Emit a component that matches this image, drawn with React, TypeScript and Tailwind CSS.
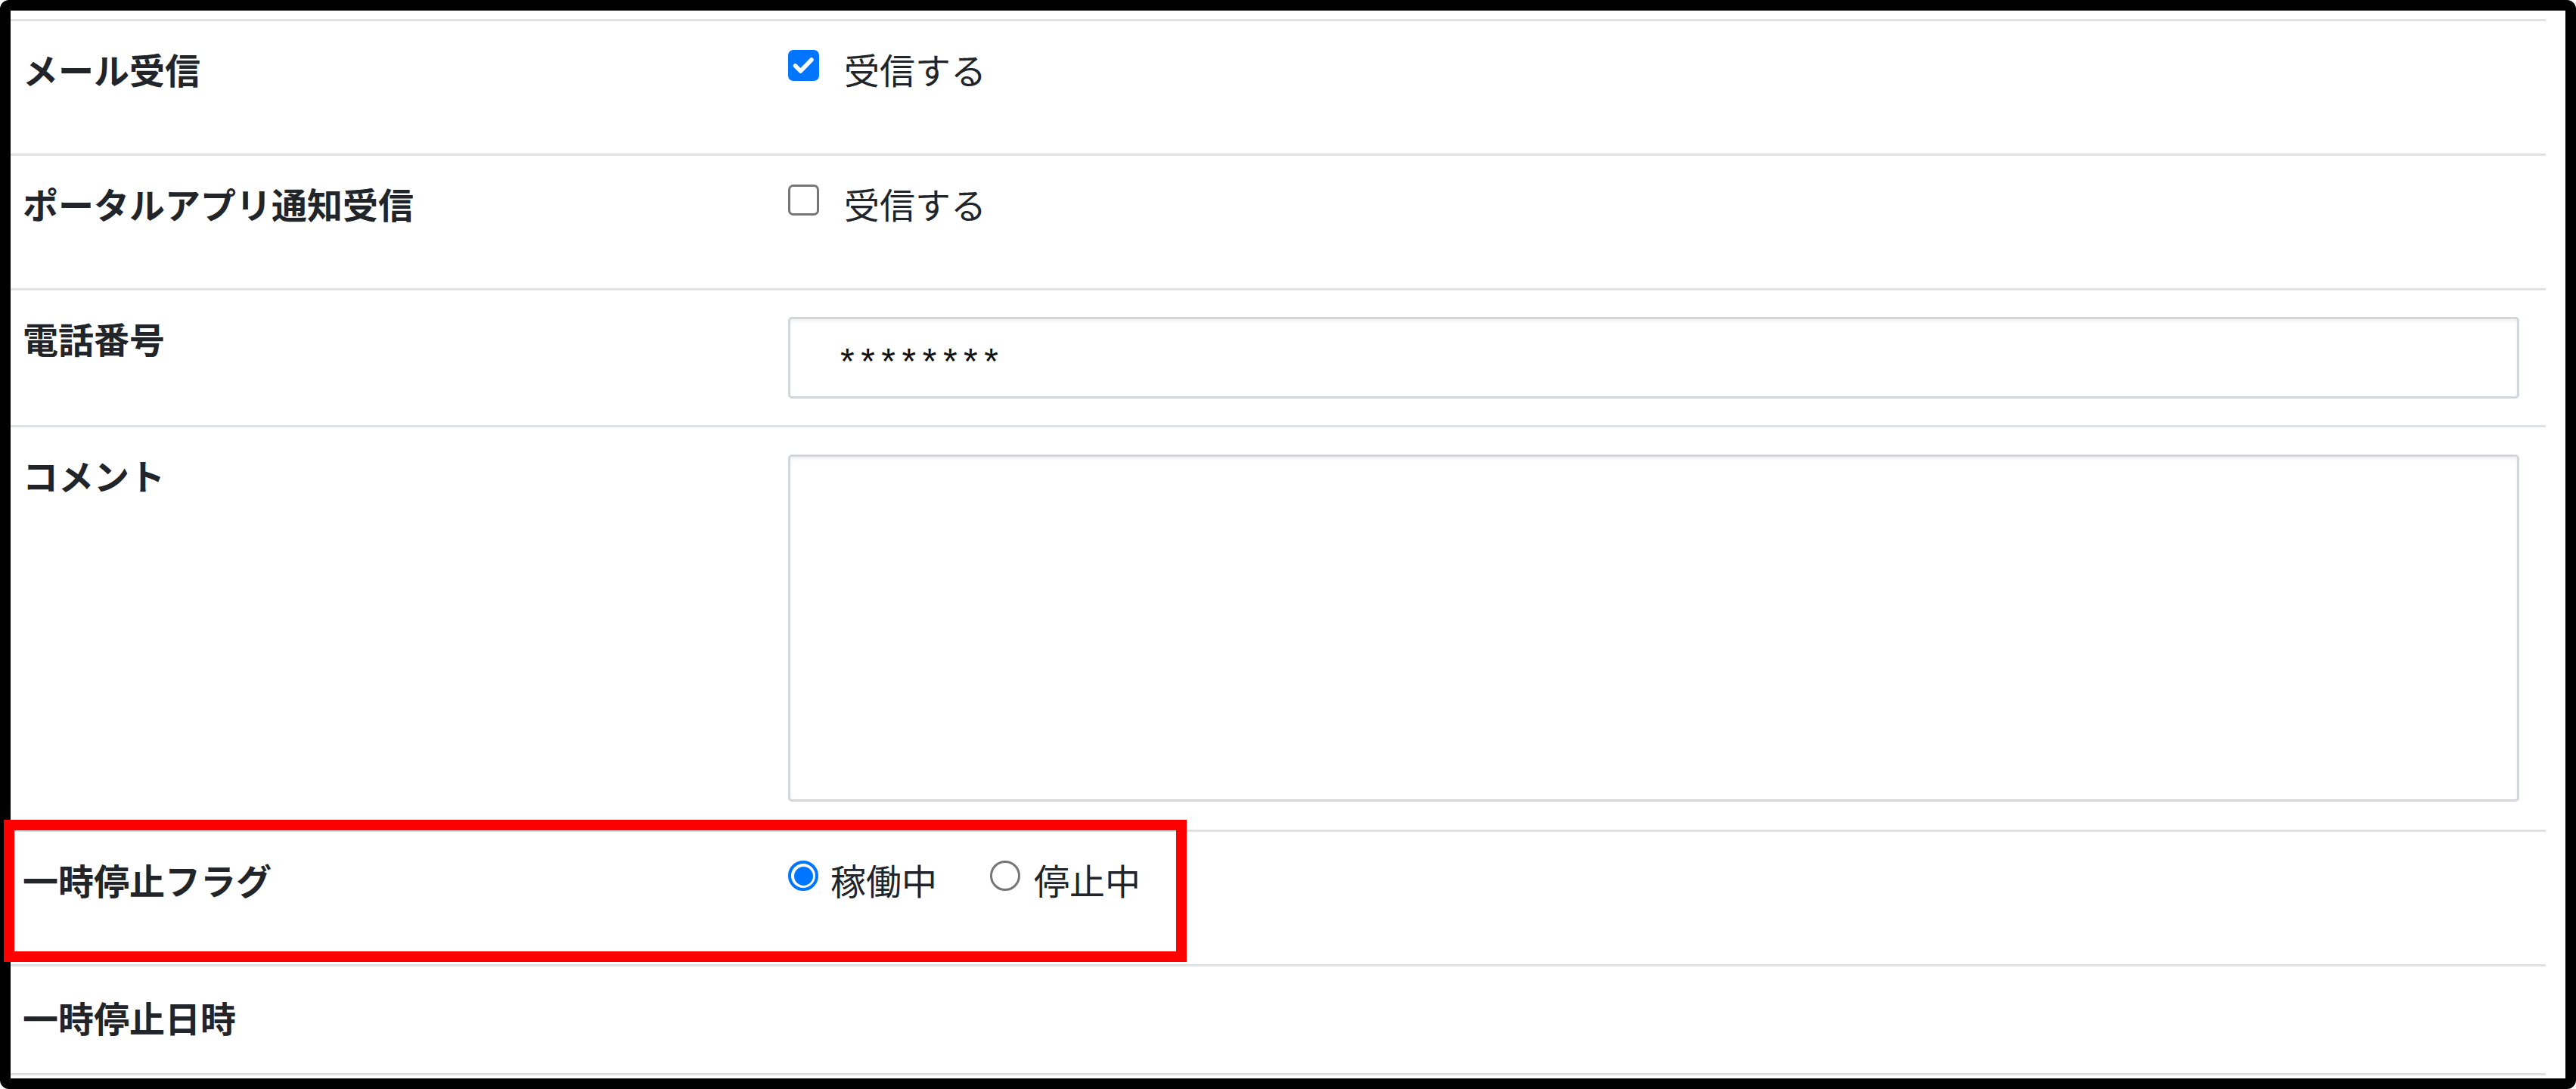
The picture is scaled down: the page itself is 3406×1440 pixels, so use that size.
import React from "react";

const FONT = "font-['Noto_Sans_CJK_JP','Noto_Sans',sans-serif]";

function CheckedBox() {
  return (
    <div className="mt-[10px] w-[41px] h-[41px] shrink-0 rounded-[7px] bg-[#0075ff] flex items-center justify-center">
      <svg width="41" height="41" viewBox="0 0 41 41">
        <path d="M9.5 21 L16.5 28 L31 13" fill="none" stroke="#ffffff" strokeWidth="5.5" strokeLinecap="round" strokeLinejoin="round" />
      </svg>
    </div>
  );
}

function EmptyBox() {
  return <div className="mt-[10px] w-[41px] h-[41px] shrink-0 rounded-[7px] border-[3px] border-[#767676] bg-white" />;
}

function RadioOn() {
  return (
    <div className="mt-[10px] w-[40px] h-[40px] shrink-0 rounded-full border-[4px] border-[#0075ff] bg-white flex items-center justify-center">
      <div className="w-[25px] h-[25px] rounded-full bg-[#0075ff]" />
    </div>
  );
}

function RadioOff() {
  return <div className="mt-[10px] w-[40px] h-[40px] shrink-0 rounded-full border-[3px] border-[#767676] bg-white" />;
}

function Label({ children, pt = "pt-[28px]" }: { children: React.ReactNode; pt?: string }) {
  return (
    <div className={`w-[1028px] shrink-0 pl-[16px] ${pt} font-bold text-[47px] leading-[69px]`}>{children}</div>
  );
}

export default function App() {
  return (
    <div className={`relative w-[3406px] h-[1440px] bg-white ${FONT} text-[#212529]`}>
      <div className="w-full h-full border-[14px] border-black rounded-[12px] bg-white pt-[11px] pr-[26px]">
        {/* メール受信 */}
        <div className="flex h-[178px] border-t-[3px] border-[#dee2e6]">
          <Label>メール受信</Label>
          <div className="flex-1 pr-[35px] pt-[28px] flex items-start">
            <CheckedBox />
            <span className="ml-[33px] text-[47px] leading-[69px]">受信する</span>
          </div>
        </div>
        {/* ポータルアプリ通知受信 */}
        <div className="flex h-[178px] border-t-[3px] border-[#dee2e6]">
          <Label>ポータルアプリ通知受信</Label>
          <div className="flex-1 pr-[35px] pt-[28px] flex items-start">
            <EmptyBox />
            <span className="ml-[33px] text-[47px] leading-[69px]">受信する</span>
          </div>
        </div>
        {/* 電話番号 */}
        <div className="flex h-[181px] border-t-[3px] border-[#dee2e6]">
          <Label>電話番号</Label>
          <div className="flex-1 pr-[35px] pt-[35px]">
            <div className="h-[108px] rounded-[5px] border-[3px] border-[#d3d6db] bg-white shadow-[inset_0_3px_4px_rgba(0,0,0,0.06)] pl-[66px] pt-[21px]">
              <span className="font-['Liberation_Sans',sans-serif] text-[48px] leading-[69px] tracking-[8.5px] text-[#111]">********</span>
            </div>
          </div>
        </div>
        {/* コメント */}
        <div className="flex h-[535px] border-t-[3px] border-[#dee2e6]">
          <Label>コメント</Label>
          <div className="flex-1 pr-[35px] pt-[36px]">
            <div className="h-[459px] rounded-[5px] border-[3px] border-[#d3d6db] bg-white shadow-[inset_0_3px_4px_rgba(0,0,0,0.06)]" />
          </div>
        </div>
        {/* 一時停止フラグ */}
        <div className="flex h-[178px] border-t-[3px] border-[#dee2e6]">
          <Label>一時停止フラグ</Label>
          <div className="flex-1 pr-[35px] pt-[28px] flex items-start">
            <RadioOn />
            <span className="ml-[16px] text-[47px] leading-[69px]">稼働中</span>
            <div className="ml-[70px] flex items-start">
              <RadioOff />
              <span className="ml-[18px] text-[47px] leading-[69px]">停止中</span>
            </div>
          </div>
        </div>
        {/* 一時停止日時 */}
        <div className="flex h-[144px] border-t-[3px] border-[#dee2e6]">
          <Label pt="pt-[32px]">一時停止日時</Label>
          <div className="flex-1 pr-[35px]" />
        </div>
        <div className="border-t-[3px] border-[#dee2e6]" />
      </div>
      <div className="absolute left-[5px] top-[1084px] w-[1564px] h-[188px] border-[14px] border-[#ff0000]" />
    </div>
  );
}
